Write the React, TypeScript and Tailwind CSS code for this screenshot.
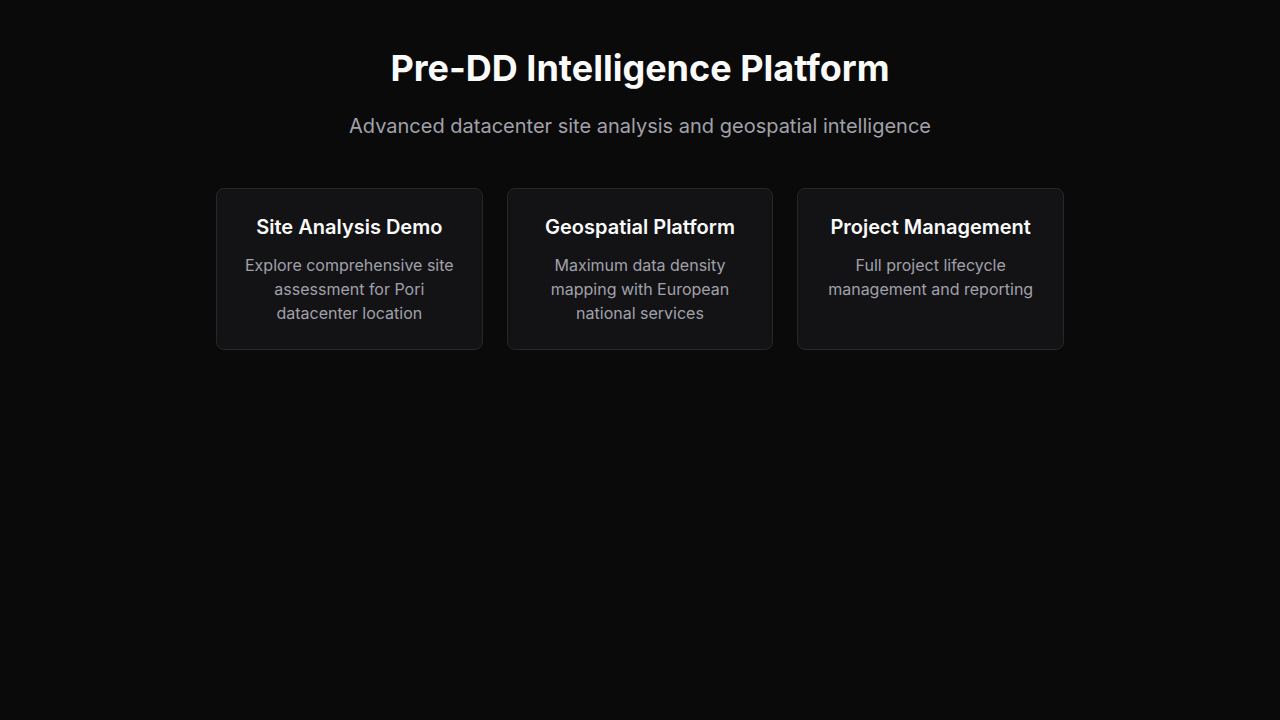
import React from "react";

const cards = [
  {
    title: "Site Analysis Demo",
    desc: "Explore comprehensive site assessment for Pori datacenter location",
  },
  {
    title: "Geospatial Platform",
    desc: "Maximum data density mapping with European national services",
  },
  {
    title: "Project Management",
    desc: "Full project lifecycle management and reporting",
  },
];

export default function App() {
  return (
    <div
      className="min-h-screen w-full bg-[#0a0a0a] text-white"
      style={{ fontFamily: "Inter, 'Noto Sans', sans-serif" }}
    >
      <div className="mx-auto max-w-4xl px-6 py-12 text-center">
        <h1 className="text-4xl leading-10 font-bold text-[#fafafa]">
          Pre-DD Intelligence Platform
        </h1>
        <p className="mt-6 text-xl leading-7 text-[#a1a1aa]">
          Advanced datacenter site analysis and geospatial intelligence
        </p>
        <div className="mt-12 grid grid-cols-3 gap-6">
          {cards.map((c) => (
            <div
              key={c.title}
              className="rounded-lg border border-[#27272a] bg-[#131316] p-6"
            >
              <h3 className="text-xl leading-7 font-semibold text-[#fafafa]">
                {c.title}
              </h3>
              <p className="mt-3 text-base leading-6 text-[#a1a1aa]">
                {c.desc}
              </p>
            </div>
          ))}
        </div>
      </div>
    </div>
  );
}
